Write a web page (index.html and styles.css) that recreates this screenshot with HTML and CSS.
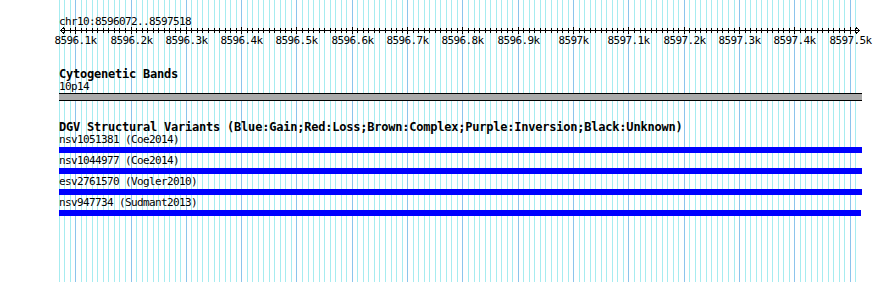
FILE: index.html
```html
<!DOCTYPE html>
<html lang="en">
<head>
  <meta charset="UTF-8">
  <meta name="viewport" content="width=device-width, initial-scale=1.0">
  <title>chr10:8596072..8597518</title>
  <link rel="stylesheet" href="styles.css">
</head>
<body>
  <div class="panel">
    <svg class="grid" width="890" height="282" shape-rendering="crispEdges"></svg>

    <div class="ruler">
      <div class="ruler-title">chr10:8596072..8597518</div>
      <svg class="axis" width="890" height="8" shape-rendering="crispEdges"></svg>
      <div class="tick-labels"></div>
    </div>

    <div class="track bands">
      <div class="track-title">Cytogenetic Bands</div>
      <div class="label">10p14</div>
      <div class="band"></div>
    </div>

    <div class="track dgv">
      <div class="track-title">DGV Structural Variants (Blue:Gain;Red:Loss;Brown:Complex;Purple:Inversion;Black:Unknown)</div>
      <div class="feature">
        <div class="label">nsv1051381 (Coe2014)</div>
        <div class="bar"></div>
      </div>
      <div class="feature">
        <div class="label">nsv1044977 (Coe2014)</div>
        <div class="bar"></div>
      </div>
      <div class="feature">
        <div class="label">esv2761570 (Vogler2010)</div>
        <div class="bar"></div>
      </div>
      <div class="feature">
        <div class="label">nsv947734 (Sudmant2013)</div>
        <div class="bar bar-short"></div>
      </div>
    </div>
  </div>

  <script>
    const start = 8596072, end = 8597518
    const left = 59.7, width = 800
    const scale = width / (end - start)
    const px = pos => Math.round(left + (pos - start) * scale)
    const ns = 'http://www.w3.org/2000/svg'

    // vertical grid, every 10bp, darker every 100bp
    const $grid = document.querySelector('.grid')
    for (let p = Math.floor(start / 10) * 10; p <= end; p += 10) {
      let x = px(p)
      if (x < 59) continue
      let $line = document.createElementNS(ns, 'rect')
      $line.setAttribute('x', x)
      $line.setAttribute('y', 0)
      $line.setAttribute('width', 1)
      $line.setAttribute('height', 282)
      $line.setAttribute('class', p % 100 === 0 ? 'major' : 'minor')
      $grid.appendChild($line)
    }

    // ruler axis with ticks and arrow heads
    const $axis = document.querySelector('.axis')
    let d = `M60 3.5H860M64 0.5L60.5 3.5L64 6.5M856 0.5L859.5 3.5L856 6.5`
    for (let p = Math.ceil(start / 10) * 10; p <= end; p += 10) {
      let x = px(p) + 0.5
      d += p % 100 === 0 ? `M${x} 0V7` : `M${x} 1V6`
    }
    let $path = document.createElementNS(ns, 'path')
    $path.setAttribute('d', d)
    $axis.appendChild($path)

    // tick labels
    const $labels = document.querySelector('.tick-labels')
    for (let p = Math.ceil(start / 100) * 100; p <= end; p += 100) {
      let $label = document.createElement('span')
      $label.className = 'tick-label'
      $label.textContent = (p / 1000) + 'k'
      $label.style.left = (px(p) + 0.5) + 'px'
      $labels.appendChild($label)
    }
  </script>
</body>
</html>
```

FILE: styles.css
```css
body{
  margin: 0;
  background: #fff;
}

.panel{
  position: relative;
  z-index: 0;
  width: 890px;
  height: 282px;
  padding-top: 16px;
  box-sizing: border-box;
  overflow: hidden;
  font-family: "DejaVu Sans Mono", "Liberation Mono", monospace;
  color: #000;
}

/* grid lies under every track */
.grid{
  position: absolute;
  top: 0;
  left: 0;
  z-index: -1;
}
.grid .minor{
  fill: #a6ecf0;
}
.grid .major{
  fill: #8cc4ec;
}

.ruler-title,
.label,
.tick-label{
  font-size: 11px;
  letter-spacing: -0.62px;
  white-space: nowrap;
}

.ruler-title{
  margin-left: 59px;
  line-height: 11px;
}

.axis{
  display: block;
}
.axis path{
  fill: none;
  stroke: #000;
  stroke-width: 1;
}

.tick-labels{
  position: relative;
  height: 11px;
}
.tick-label{
  position: absolute;
  top: 0;
  line-height: 11px;
  transform: translateX(-50%);
}

.track{
  margin-left: 59px;
}
.track.bands{
  margin-top: 22px;
}
.track.dgv{
  margin-top: 20px;
}

.track-title{
  font-size: 12px;
  font-weight: bold;
  letter-spacing: -0.22px;
  line-height: 13px;
  white-space: nowrap;
}

.label{
  line-height: 12px;
}

.band{
  width: 803px;
  height: 6px;
  border-top: 1px solid #000;
  border-bottom: 1px solid #000;
  background: #aaa;
}

.feature .bar{
  width: 803px;
  height: 6px;
  margin: 1px 0 2px;
  background: #00f;
}
.feature .bar.bar-short{
  width: 802px;
}
```
